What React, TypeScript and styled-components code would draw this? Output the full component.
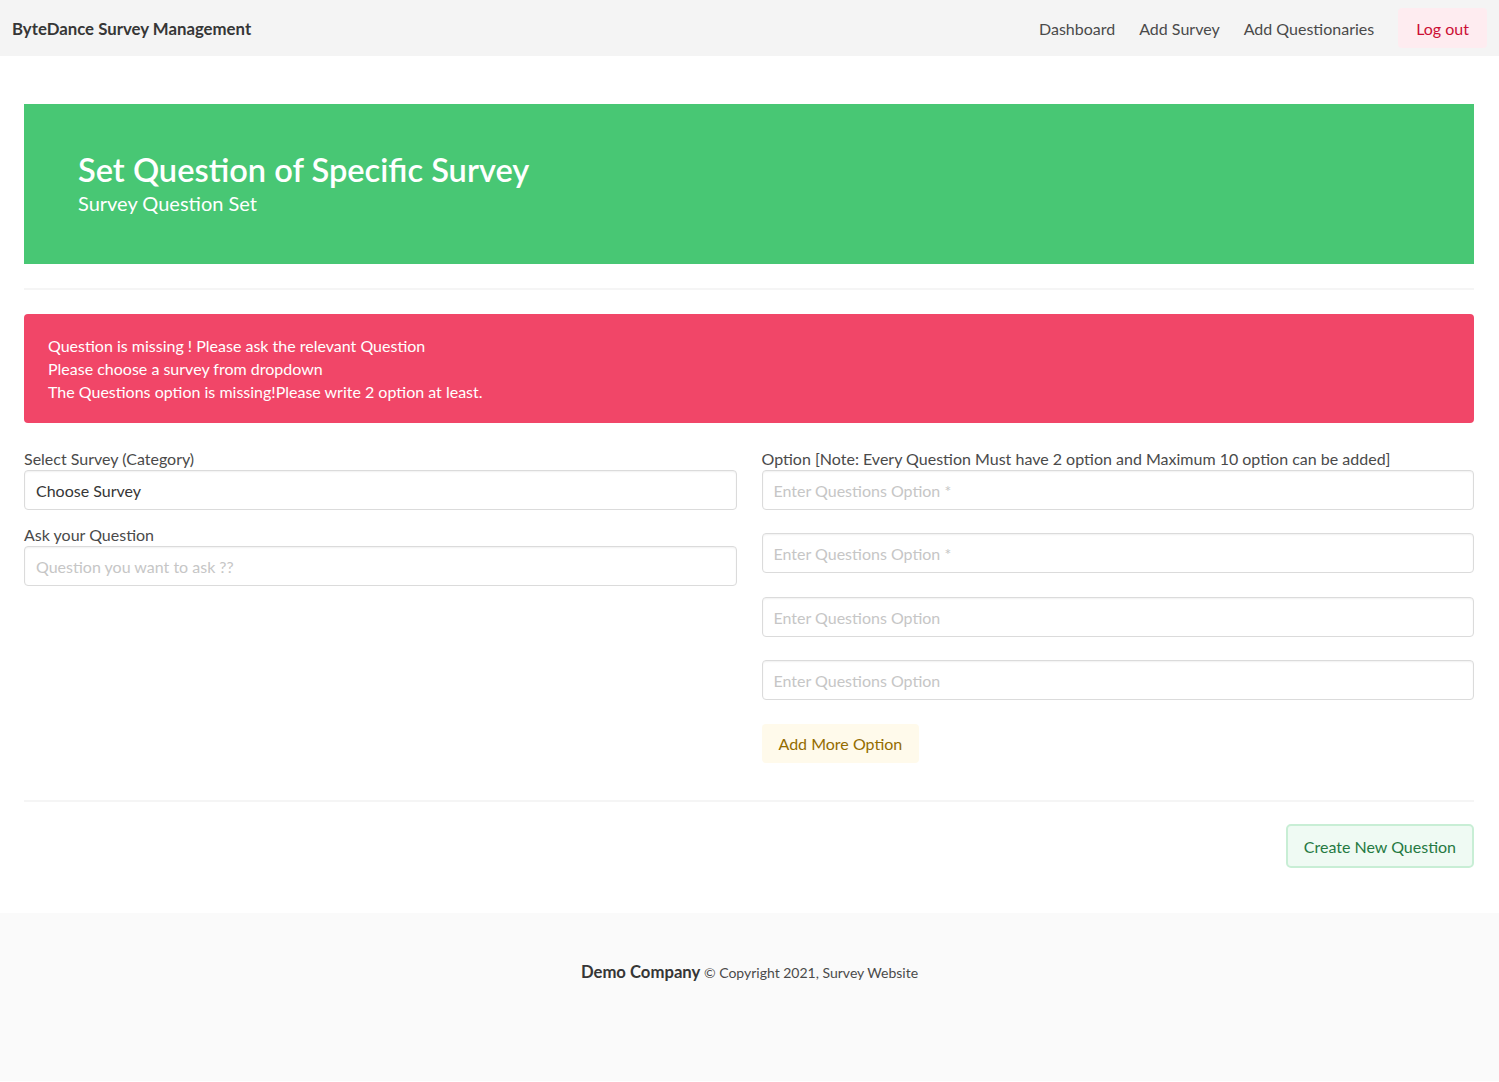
import React from 'react'
import styled, { createGlobalStyle } from 'styled-components'

const GlobalStyle = createGlobalStyle`
  html, body {
    margin: 0;
    padding: 0;
    background: #ffffff;
  }
  body {
    font-family: "Segoe UI", Lato, "Liberation Sans", sans-serif;
    font-size: 16px;
    color: #4a4a4a;
  }
  * {
    box-sizing: border-box;
  }
`

const Navbar = styled.nav`
  height: 56px;
  background: #f4f4f4;
  display: flex;
  align-items: center;
  justify-content: space-between;
  padding: 0 12px;
`

const Brand = styled.div`
  font-weight: 700;
  font-size: 16.8px;
  color: #363636;
`

const NavEnd = styled.div`
  display: flex;
  align-items: center;
  gap: 24px;
`

const NavLink = styled.a`
  color: #4a4a4a;
  text-decoration: none;
  font-size: 16px;
`

const LogoutButton = styled.button`
  height: 40px;
  padding: 0 18px;
  border: none;
  border-radius: 4px;
  background: #feecf0;
  color: #cc0f35;
  font: inherit;
  font-size: 16px;
`

const Main = styled.main`
  padding: 48px 25px 45px 24px;
`

const Hero = styled.section`
  background: #48c774;
  padding: 48px 54px;
  color: #ffffff;
`

const Title = styled.h1`
  margin: 0 0 3px;
  font-size: 32.6px;
  line-height: 36px;
  font-weight: 600;
`

const Subtitle = styled.h2`
  margin: 0;
  font-size: 20px;
  line-height: 25px;
  font-weight: 400;
`

const Divider = styled.hr<{ $top?: number; $bottom?: number }>`
  border: none;
  height: 2px;
  background: #f5f5f5;
  margin: ${({ $top = 24 }) => $top}px 0 ${({ $bottom = 24 }) => $bottom}px;
`

const Notification = styled.div`
  background: #f14668;
  color: #ffffff;
  border-radius: 4px;
  padding: 20px 24px;
  font-size: 16px;
  line-height: 23px;
  margin-bottom: 24px;
`

const Columns = styled.div`
  display: grid;
  grid-template-columns: 1fr 1fr;
  column-gap: 25px;
  align-items: start;
`

const Column = styled.div`
  display: flex;
  flex-direction: column;
`

const Field = styled.div<{ $gap?: number }>`
  display: flex;
  flex-direction: column;
  margin-bottom: ${({ $gap = 13 }) => $gap}px;
`

const Label = styled.label`
  font-size: 16px;
  line-height: 23px;
  color: #4a4a4a;
`

const inputBase = `
  height: 40px;
  width: 100%;
  border: 1px solid #dbdbdb;
  border-radius: 4px;
  box-shadow: inset 0 1px 2px rgba(10, 10, 10, 0.06);
  padding: 0 11px;
  font-family: inherit;
  font-size: 16px;
  color: #363636;
  background: #ffffff;
  outline: none;
`

const Input = styled.input`
  ${inputBase}
  &::placeholder {
    color: #c6c6c6;
  }
`

const Select = styled.select`
  ${inputBase}
  appearance: none;
`

const AddOptionButton = styled.button`
  align-self: flex-start;
  height: 39px;
  padding: 0 17px;
  border: none;
  border-radius: 4px;
  background: #fffaeb;
  color: #946c00;
  font: inherit;
  font-size: 16px;
`

const Actions = styled.div`
  display: flex;
  justify-content: flex-end;
`

const CreateButton = styled.button`
  height: 44px;
  padding: 0 16px;
  border: 2px solid #c8eed5;
  border-radius: 5px;
  background: #effaf3;
  color: #257942;
  font: inherit;
  font-size: 16px;
`

const Footer = styled.footer`
  background: #fafafa;
  padding: 47px 24px 96px;
  text-align: center;
  line-height: 24px;
  font-size: 14px;
  color: #4a4a4a;
`

const Company = styled.strong`
  font-size: 16.7px;
  color: #363636;
  font-weight: 700;
`

// gap below each option box; the reference alternates 23/24px
const options = [
  { placeholder: 'Enter Questions Option *', gap: 23 },
  { placeholder: 'Enter Questions Option *', gap: 24 },
  { placeholder: 'Enter Questions Option', gap: 23 },
  { placeholder: 'Enter Questions Option', gap: 24 },
]

const App = () => {
  return (
    <>
      <GlobalStyle />
      <Navbar>
        <Brand>ByteDance Survey Management</Brand>
        <NavEnd>
          <NavLink href="#">Dashboard</NavLink>
          <NavLink href="#">Add Survey</NavLink>
          <NavLink href="#">Add Questionaries</NavLink>
          <LogoutButton>Log out</LogoutButton>
        </NavEnd>
      </Navbar>
      <Main>
        <Hero>
          <Title>Set Question of Specific Survey</Title>
          <Subtitle>Survey Question Set</Subtitle>
        </Hero>
        <Divider />
        <Notification>
          Question is missing ! Please ask the relevant Question
          <br />
          Please choose a survey from dropdown
          <br />
          The Questions option is missing!Please write 2 option at least.
        </Notification>
        <Columns>
          <Column>
            <Field>
              <Label>Select Survey (Category)</Label>
              <Select defaultValue="">
                <option value="">Choose Survey</option>
              </Select>
            </Field>
            <Field>
              <Label>Ask your Question</Label>
              <Input placeholder="Question you want to ask ??" />
            </Field>
          </Column>
          <Column>
            <Label>Option [Note: Every Question Must have 2 option and Maximum 10 option can be added]</Label>
            {options.map((opt, i) => (
              <Field key={i} $gap={opt.gap}>
                <Input placeholder={opt.placeholder} />
              </Field>
            ))}
            <AddOptionButton>Add More Option</AddOptionButton>
          </Column>
        </Columns>
        <Divider $top={37} $bottom={22} />
        <Actions>
          <CreateButton>Create New Question</CreateButton>
        </Actions>
      </Main>
      <Footer>
        <Company>Demo Company</Company> © Copyright 2021, Survey Website
      </Footer>
    </>
  )
}

export default App
